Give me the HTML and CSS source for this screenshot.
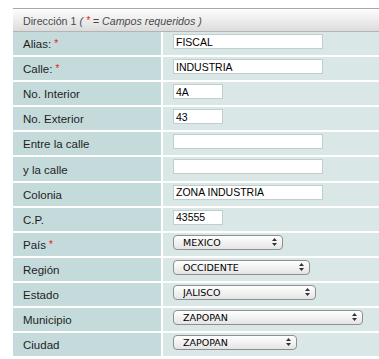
FILE: index.html
```html
<!DOCTYPE html>
<html lang="es">
<head>
    <meta charset="UTF-8">
    <meta name="viewport" content="width=device-width, initial-scale=1.0">
    <title>Dirección</title>
    <link rel="stylesheet" href="styles.css">
</head>
<body>
    <form class="panel" id="direccionForm">
        <div class="panel-head">Dirección 1 <em>( <span class="req">*</span> = Campos requeridos )</em></div>
        <div class="rows">
            <div class="row">
                <label class="cell-label" for="alias">Alias: <span class="req">*</span></label>
                <div class="cell-value"><input class="txt" type="text" id="alias" value="FISCAL"></div>
            </div>
            <div class="row">
                <label class="cell-label" for="calle">Calle: <span class="req">*</span></label>
                <div class="cell-value"><input class="txt" type="text" id="calle" value="INDUSTRIA"></div>
            </div>
            <div class="row">
                <label class="cell-label" for="no_int">No. Interior</label>
                <div class="cell-value"><input class="txt short" type="text" id="no_int" value="4A"></div>
            </div>
            <div class="row">
                <label class="cell-label" for="no_ext">No. Exterior</label>
                <div class="cell-value"><input class="txt short" type="text" id="no_ext" value="43"></div>
            </div>
            <div class="row">
                <label class="cell-label" for="entre">Entre la calle</label>
                <div class="cell-value"><input class="txt" type="text" id="entre" value=""></div>
            </div>
            <div class="row">
                <label class="cell-label" for="ylacalle">y la calle</label>
                <div class="cell-value"><input class="txt" type="text" id="ylacalle" value=""></div>
            </div>
            <div class="row">
                <label class="cell-label" for="colonia">Colonia</label>
                <div class="cell-value"><input class="txt" type="text" id="colonia" value="ZONA INDUSTRIA"></div>
            </div>
            <div class="row">
                <label class="cell-label" for="cp">C.P.</label>
                <div class="cell-value"><input class="txt short" type="text" id="cp" value="43555"></div>
            </div>
            <div class="row">
                <label class="cell-label" for="pais">País <span class="req">*</span></label>
                <div class="cell-value sel-cell">
                    <span class="sel w-pais">
                        <select id="pais"><option>MEXICO</option></select>
                        <svg class="sel-arrows" width="5" height="8" viewBox="0 0 5 8"><path d="M2.5 0L5 3H0z M0 5h5L2.5 8z" fill="#333"/></svg>
                    </span>
                </div>
            </div>
            <div class="row">
                <label class="cell-label" for="region">Región</label>
                <div class="cell-value sel-cell">
                    <span class="sel w-region">
                        <select id="region"><option>OCCIDENTE</option></select>
                        <svg class="sel-arrows" width="5" height="8" viewBox="0 0 5 8"><path d="M2.5 0L5 3H0z M0 5h5L2.5 8z" fill="#333"/></svg>
                    </span>
                </div>
            </div>
            <div class="row">
                <label class="cell-label" for="estado">Estado</label>
                <div class="cell-value sel-cell">
                    <span class="sel w-estado">
                        <select id="estado"><option>JALISCO</option></select>
                        <svg class="sel-arrows" width="5" height="8" viewBox="0 0 5 8"><path d="M2.5 0L5 3H0z M0 5h5L2.5 8z" fill="#333"/></svg>
                    </span>
                </div>
            </div>
            <div class="row">
                <label class="cell-label" for="municipio">Municipio</label>
                <div class="cell-value sel-cell">
                    <span class="sel w-municipio">
                        <select id="municipio"><option>ZAPOPAN</option></select>
                        <svg class="sel-arrows" width="5" height="8" viewBox="0 0 5 8"><path d="M2.5 0L5 3H0z M0 5h5L2.5 8z" fill="#333"/></svg>
                    </span>
                </div>
            </div>
            <div class="row">
                <label class="cell-label" for="ciudad">Ciudad</label>
                <div class="cell-value sel-cell">
                    <span class="sel w-ciudad">
                        <select id="ciudad"><option>ZAPOPAN</option></select>
                        <svg class="sel-arrows" width="5" height="8" viewBox="0 0 5 8"><path d="M2.5 0L5 3H0z M0 5h5L2.5 8z" fill="#333"/></svg>
                    </span>
                </div>
            </div>
        </div>
    </form>
</body>
</html>
```

FILE: styles.css
```css
body {
    margin: 0;
    font-family: "Liberation Sans", Arial, sans-serif;
    background: #fff;
}
.panel {
    margin: 8px 0 0 13px;
}
.panel-head {
    height: 22px;
    line-height: 24px;
    padding-left: 10px;
    border-top: 1px solid #a8a8a8;
    border-bottom: 1px solid #b4b4b4;
    background: linear-gradient(#fefefe, #dcdcdc);
    font-size: 10.7px;
    color: #4a4a4a;
    white-space: nowrap;
}
.req {
    color: #e8141b;
    font-size: 10px;
    vertical-align: top;
}
.rows {
    display: flex;
    flex-direction: column;
    gap: 2px;
}
.row {
    display: grid;
    grid-template-columns: 148px 1fr;
    column-gap: 2px;
    height: 23.1px;
}
.cell-label {
    display: flex;
    align-items: center;
    gap: 3px;
    padding: 1px 0 0 10px;
    background: #c5dbdb;
    font-size: 11.5px;
    color: #1e1e1e;
}
.cell-label .req {
    align-self: flex-start;
    margin-top: 6px;
    line-height: 10px;
}
.cell-value {
    padding: 2px 0 0 10px;
    background: #d9e7e6;
}
.txt {
    box-sizing: border-box;
    display: block;
    width: 150px;
    height: 15px;
    margin: 0;
    padding: 0 2px;
    border: 1px solid #c2cece;
    background: #fff;
    font-family: "Liberation Sans", Arial, sans-serif;
    font-size: 10.5px;
    color: #000;
}
.txt.short {
    width: 50px;
}
.sel-cell {
    padding-top: 2px;
}
.sel {
    position: relative;
    display: block;
    height: 15px;
}
.sel select {
    -webkit-appearance: none;
    appearance: none;
    box-sizing: border-box;
    display: block;
    width: 100%;
    height: 15px;
    margin: 0;
    padding: 0 0 0 9px;
    border: 1px solid #8f8f8f;
    border-radius: 4px;
    background: linear-gradient(#ffffff, #f2f2f2 50%, #e4e4e4);
    font-family: "DejaVu Sans", sans-serif;
    font-size: 9.5px;
    color: #000;
}
.sel-arrows {
    position: absolute;
    right: 6px;
    top: 3px;
    pointer-events: none;
}
.w-pais { width: 110px; }
.w-region { width: 137px; }
.w-estado { width: 143px; }
.w-municipio { width: 190px; }
.w-ciudad { width: 124px; }
```
